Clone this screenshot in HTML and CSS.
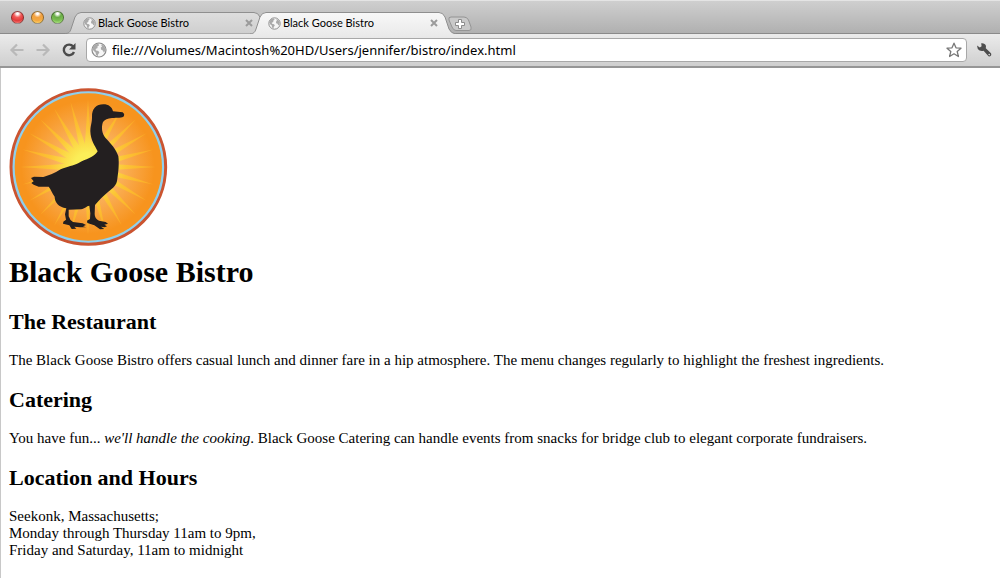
FILE: index.html
```html
<!DOCTYPE html>
<html lang="en">
<head>
<meta charset="utf-8">
<title>Black Goose Bistro</title>
<link rel="stylesheet" href="styles.css">
</head>
<body>
<svg class="defs" aria-hidden="true">
  <defs>
    <linearGradient id="tab-back" x1="0" y1="0" x2="0" y2="1"><stop offset="0" stop-color="#dedede"/><stop offset="1" stop-color="#cfcfcf"/></linearGradient>
    <linearGradient id="tab-front" x1="0" y1="0" x2="0" y2="1"><stop offset="0" stop-color="#f8f8f8"/><stop offset="1" stop-color="#ebebeb"/></linearGradient>
    <symbol id="globe" viewBox="0 0 16 16">
      <circle cx="8" cy="8" r="7" fill="#f6f6f6" stroke="#8c8c8c" stroke-width="1.2"/>
      <path d="M2 5 4 2.6 7.5 1.8 8 3.4 6.4 4.6 6.6 6 4.6 7 5 8.4 7.4 9 8.4 10.4 7 12.4 6.8 14.2 5 13 4.6 10.6 2.6 8.8 1.6 7ZM10 2.6 12.6 3.6 14.4 6.6 14.2 9 12.8 10.6 11.8 8.4 10 7.6 9.8 5.6 11 4.8Z" fill="#aaa"/>
    </symbol>
    <symbol id="cross" viewBox="0 0 8 8"><path d="M1 1 7 7M7 1 1 7" fill="none" stroke="#9b9b9b" stroke-width="2"/></symbol>
  </defs>
</svg>
<header class="browser">
  <div class="titlebar">
    <div class="lights">
      <button class="light red" aria-label="Close window"></button>
      <button class="light amber" aria-label="Minimize window"></button>
      <button class="light green" aria-label="Zoom window"></button>
    </div>
    <div class="tabs">
      <div class="tab">
        <svg class="shape" viewBox="0 0 206 22" preserveAspectRatio="none" aria-hidden="true"><path d="M0 21.5C4 21.5 5 20 6 17L10 5Q12 .5 16 .5H189Q193 .5 195 5L199 17Q201 21.5 206 21.5" fill="url(#tab-back)" stroke="#8f8f8f"/></svg>
        <svg class="tab-icon" aria-hidden="true"><use href="#globe"/></svg>
        <span class="tab-title">Black Goose Bistro</span>
        <button class="close" aria-label="Close tab"><svg aria-hidden="true"><use href="#cross"/></svg></button>
      </div>
      <div class="tab active">
        <svg class="shape" viewBox="0 0 206 22" preserveAspectRatio="none" aria-hidden="true"><path d="M0 22C4 21.5 5 20 6 17L10 5Q12 .5 16 .5H189Q193 .5 195 5L199 17Q201 21.5 206 22" fill="url(#tab-front)" stroke="#8f8f8f"/></svg>
        <svg class="tab-icon" aria-hidden="true"><use href="#globe"/></svg>
        <span class="tab-title">Black Goose Bistro</span>
        <button class="close" aria-label="Close tab"><svg aria-hidden="true"><use href="#cross"/></svg></button>
      </div>
      <button class="new-tab" aria-label="New tab"><svg viewBox="0 0 26 16" aria-hidden="true"><path d="M4 1H17Q20 1 21.500 4L24 11Q25 14.500 22 14.500H9Q6.500 14.500 5 11L2 4Q1 1 4 1Z" fill="#c9c9c9" stroke="#949494"/><path d="M11.500 3.500H14.500V6.500H17.500V9.500H14.500V12.500H11.500V9.500H8.500V6.500H11.500Z" fill="#fff" stroke="#8d8d8d"/></svg></button>
    </div>
  </div>
  <div class="toolbar">
    <button class="tool" aria-label="Back" disabled><svg viewBox="0 0 16 16" aria-hidden="true"><path d="M14.500 8H3M8 2.500 2.500 8 8 13.500" fill="none" stroke="#b9b9b9" stroke-width="2.200"/></svg></button>
    <button class="tool" aria-label="Forward" disabled><svg viewBox="0 0 16 16" aria-hidden="true"><path d="M1.500 8H13M8 2.500 13.500 8 8 13.500" fill="none" stroke="#b9b9b9" stroke-width="2.200"/></svg></button>
    <button class="tool" aria-label="Reload"><svg viewBox="0 0 16 16" aria-hidden="true"><path d="M12.200 4.500A5.300 5.300 0 1 0 13 10" fill="none" stroke="#4b4b4b" stroke-width="2.400"/><path d="M14.500 1V7.500H8Z" fill="#4b4b4b"/></svg></button>
    <div class="address">
      <svg class="site-icon" aria-hidden="true"><use href="#globe"/></svg>
      <input class="url" type="text" aria-label="Address" value="file:///Volumes/Macintosh%20HD/Users/jennifer/bistro/index.html">
      <button class="tool" aria-label="Bookmark"><svg viewBox="0 0 16 16" aria-hidden="true"><path d="M8 1.200 10 5.800 15 6.200 11.200 9.500 12.400 14.500 8 11.800 3.600 14.500 4.800 9.500 1 6.200 6 5.800Z" fill="#fff" stroke="#777" stroke-width="1.300" stroke-linejoin="round"/></svg></button>
    </div>
    <button class="tool" aria-label="Settings"><svg viewBox="0 0 16 16" aria-hidden="true"><path d="M1 3.500 3.800 5.400 5.600 4.200 5.200 1.200Q9 .8 10 4L9.800 6.200 15 11.200Q16 13.500 13.500 14.500L12.500 14.200 7.600 8.800Q4 9.800 1.800 7Z" fill="#4d4d4d"/><circle cx="13.200" cy="12.600" r=".8" fill="#ddd"/></svg></button>
  </div>
</header>
<main class="page">
  <h1 class="brand">
    <svg class="logo" viewBox="29 22 480 474" role="img" aria-label="Black Goose logo">
      <defs>
        <radialGradient id="glow"><stop offset="0" stop-color="#fff36b"/><stop offset=".25" stop-color="#fcd364"/><stop offset=".5" stop-color="#fab05a"/><stop offset="1" stop-color="#f7941e"/></radialGradient>
        <radialGradient id="beam" gradientUnits="userSpaceOnUse" cx="266" cy="259" r="210"><stop offset=".2" stop-color="#fbee58"/><stop offset=".55" stop-color="#fcc435"/><stop offset="1" stop-color="#faa722"/></radialGradient>
        <path id="ray" d="M266 56 280 259H252Z" fill="url(#beam)"/>
        <g id="rays"><use href="#ray"/><use href="#ray" transform="rotate(15 266 259)"/><use href="#ray" transform="rotate(30 266 259)"/><use href="#ray" transform="rotate(45 266 259)"/><use href="#ray" transform="rotate(60 266 259)"/><use href="#ray" transform="rotate(75 266 259)"/></g>
      </defs>
      <circle cx="267" cy="259" r="232" fill="#8fd0ee" stroke="#cb5430" stroke-width="9"/>
      <circle cx="267" cy="259" r="221" fill="#f7941e"/>
      <circle cx="266" cy="259" r="200" fill="url(#glow)"/>
      <use href="#rays"/><use href="#rays" transform="rotate(90 266 259)"/><use href="#rays" transform="rotate(180 266 259)"/><use href="#rays" transform="rotate(270 266 259)"/>
      <path d="M278 110C277 83 291 71 312 71C328 71 338 79 341 92L370 95Q377 100 374 106C370 113 353 111 338 112Q318 114 311 124C305 141 308 158 318 171C333 187 352 207 357 227C360 249 357 276 354 294C352 315 342 320 326 334C310 348 300 358 287 373L286 400Q286 414 299 420L319 424 326 429 315 432 323 437 316 440 305 438 315 445 302 446 285 434 264 427 263 420 272 415 273 398 270 375C261 376 257 384 245 386L208 387 208 407Q211 418 221 424L250 428 260 433 251 437 260 440 242 440 225 438 231 444 217 445 210 434 191 429 192 423 200 417 197 401 201 383C178 379 166 365 166 348C158 337 154 325 148 318L118 318 103 312 96 307 103 302 95 292 104 288 132 289C151 284 164 278 184 266C206 257 221 255 238 247C259 235 283 232 295 212C287 195 274 180 273 151C274 132 278 126 278 110Z" fill="#231f20"/>
    </svg>
    <span>Black Goose Bistro</span>
  </h1>
  <h2>The Restaurant</h2>
  <p>The Black Goose Bistro offers casual lunch and dinner fare in a hip atmosphere. The menu changes regularly to highlight the freshest ingredients.</p>
  <h2>Catering</h2>
  <p>You have fun... <em>we'll handle the cooking</em>. Black Goose Catering can handle events from snacks for bridge club to elegant corporate fundraisers.</p>
  <h2>Location and Hours</h2>
  <p>Seekonk, Massachusetts;<br>Monday through Thursday 11am to 9pm,<br>Friday and Saturday, 11am to midnight</p>
</main>
</body>
</html>
```
FILE: styles.css
```css
* { box-sizing: border-box; }
body {
  margin: 0;
  min-height: 100vh;
  display: flex;
  flex-direction: column;
  background: #fff;
  color: #000;
}
button {
  padding: 0;
  border: 0;
  background: none;
}
svg { display: block; flex: none; }
.defs { position: absolute; width: 0; height: 0; }

.browser { font-family: "Noto Sans", "Open Sans", sans-serif; }
.titlebar {
  display: flex;
  align-items: flex-end;
  gap: 1px;
  height: 34px;
  padding-left: 11px;
  background: linear-gradient(#cfcfcf, #b0b0b0);
  border-top: 1px solid #e4e4e4;
  border-bottom: 1px solid #8a8a8a;
}
.lights { display: flex; gap: 7px; padding-bottom: 9px; }
.light {
  width: 13px;
  height: 13px;
  border-radius: 50%;
  border: 1px solid #0006;
}
.red { background: radial-gradient(circle at 50% 15%, #fff 0 8%, #f25a58 35%, #e23c3c 65%, #ff9c94); }
.amber { background: radial-gradient(circle at 50% 15%, #fff 0 8%, #f3a13f 35%, #f4a940 65%, #ffe680); }
.green { background: radial-gradient(circle at 50% 15%, #fff 0 8%, #68ac44 35%, #7cc054 65%, #c8f59a); }

.tabs { display: flex; align-items: flex-end; margin-bottom: -1px; }
.tab {
  position: relative;
  display: flex;
  align-items: center;
  width: 206px;
  height: 22px;
  padding: 0 18px;
  font: 11px/20px Lato, "Noto Sans", sans-serif;
}
.tab.active { z-index: 1; margin-left: -21px; }
.shape { position: absolute; inset: 0; width: 100%; height: 100%; }
.tab-icon { position: relative; width: 13px; height: 13px; }
.tab-title { position: relative; flex: 1; padding-left: 2px; white-space: nowrap; }
.close { position: relative; }
.close svg { width: 8px; height: 8px; }
.new-tab { margin: 0 0 2px -9px; }
.new-tab svg { width: 26px; height: 16px; }

.toolbar {
  display: flex;
  align-items: center;
  gap: 8px;
  height: 34px;
  padding: 0 7px 0 8px;
  background: linear-gradient(#ebebeb, #cfcfcf);
  border-bottom: 2px solid #969696;
}
.tool { flex: none; width: 18px; }
.tool svg { width: 16px; height: 16px; margin: 0 auto; }
.address {
  flex: 1;
  display: flex;
  align-items: center;
  height: 24px;
  padding: 0 3px 0 4px;
  background: #fff;
  border: 1px solid #a8a8a8;
  border-radius: 4px;
}
.url {
  flex: 1;
  min-width: 0;
  padding: 0 5px;
  border: 0;
  outline: 0;
  background: transparent;
  color: #000;
  font: 13px "Noto Sans", "Open Sans", sans-serif;
}
.site-icon { width: 16px; height: 16px; }

.page {
  flex: 1;
  padding: 20px 8px 0;
  border-left: 1px solid #c8c8c8;
  font: 15px/17px "Liberation Serif", serif;
}
.logo { width: 160px; height: 158px; }
.brand { margin: 0 0 20px; font-size: 30px; line-height: 34px; }
.brand span { display: block; margin-top: 9px; }
h2 { margin: 18px 0 17px; font-size: 22px; line-height: 26px; }
p { margin: 0; }
```
